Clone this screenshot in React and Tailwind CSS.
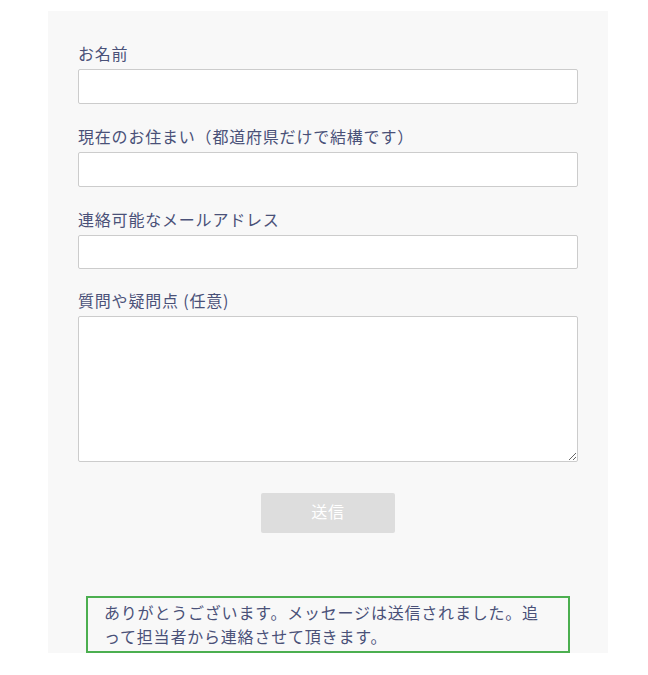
const FONT = { fontFamily: '"Noto Sans CJK JP", "Noto Sans", sans-serif' };

const INPUT_CLASSES =
  "block w-full bg-white border border-[#cccccc] rounded-[2px] outline-none";
const LABEL_CLASSES =
  "block text-[16px] leading-[20px] tracking-[0.8px] text-[#4a5178] mb-[6px]";

function Field({ label, height, gap = 22 }) {
  return (
    <div style={{ marginBottom: gap }}>
      <label className={LABEL_CLASSES}>{label}</label>
      <input className={INPUT_CLASSES} style={{ height }} />
    </div>
  );
}

export default function App() {
  return (
    <div className="w-[648px] h-[675px] bg-white pt-[11px]" style={FONT}>
      <div className="ml-[48px] w-[560px] h-[642px] bg-[#f8f8f8] px-[30px] pt-[32px]">
        <form onSubmit={(e) => e.preventDefault()}>
          <Field label="お名前" height={35} />
          <Field label="現在のお住まい（都道府県だけで結構です）" height={35} />
          <Field label="連絡可能なメールアドレス" height={34} gap={21} />
          <div>
            <label className={LABEL_CLASSES}>質問や疑問点 (任意)</label>
            <textarea className={INPUT_CLASSES + " h-[146px]"} />
          </div>
          <div className="flex justify-center pt-[31px]">
            <button
              type="submit"
              disabled
              className="w-[134px] h-[40px] pb-[4px] bg-[#dddddd] rounded-[2px] text-white text-[16px] leading-[20px] tracking-[0.8px]"
            >
              送信
            </button>
          </div>
        </form>
        <div className="mt-[63px] mx-[8px] h-[57px] border-2 border-[#4caf50] pl-[16px] pr-[14px] pt-[2px] text-[16px] leading-6 tracking-[0.8px] text-[#4a5178]">
          ありがとうございます。メッセージは送信されました。追って担当者から連絡させて頂きます。
        </div>
      </div>
    </div>
  );
}
